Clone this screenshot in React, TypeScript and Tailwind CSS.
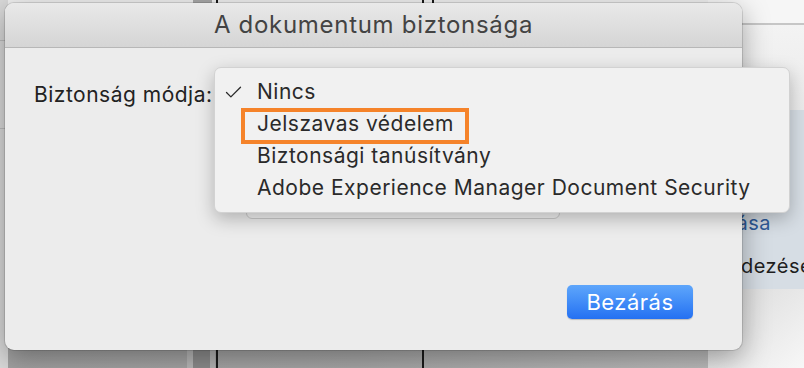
import { Check } from "lucide-react";

const items = [
  "Nincs",
  "Jelszavas védelem",
  "Biztonsági tanúsítvány",
  "Adobe Experience Manager Document Security",
];

function Backdrop() {
  return (
    <div className="absolute inset-0 flex">
      {/* left edge of the app behind */}
      <div className="flex w-[8px] flex-col bg-[#d9d9d9]">
        <div className="mt-[40px] h-px bg-[#bdbdbd]" />
        <div className="mt-[87px] h-px bg-[#bdbdbd]" />
      </div>

      <div className="flex flex-1 flex-col">
        <div className="flex h-[6px] pl-[185px]">
          <div className="w-[19px] bg-[#a9a9a9]" />
          <div className="ml-[4px] w-[2px] bg-[#1a1a1a]" />
          <div className="ml-[204px] h-[4px] w-[2px] bg-[#1a1a1a]" />
          <div className="ml-[8px] h-[4px] w-[2px] bg-[#1a1a1a]" />
        </div>
        <div className="flex-1" />
        <div className="flex h-[22px] bg-gradient-to-r from-[#a2a2a2] via-[#a8a8a8] to-[#bdbdbd] pl-[179px]">
          <div className="w-[6px] bg-[#b9b9b9]" />
          <div className="w-[17px] bg-[#8d8d8d]" />
          <div className="w-[5px] bg-[#b4b4b4]" />
          <div className="ml-[1px] w-[2px] bg-[#1a1a1a]" />
          <div className="ml-[204px] w-[2px] bg-[#1a1a1a]" />
        </div>
      </div>

      {/* right side of the app behind */}
      <div className="flex w-[96px] flex-col bg-[#efefef] text-[20px] leading-[24px] tracking-[0.5px]">
        <div className="h-[25px] border-b-2 border-[#c6c6c6] bg-[#f6f6f6]" />
        <div className="h-[85px] bg-gradient-to-b from-[#f3f3f3] to-[#ebebeb]" />
        <div className="flex h-[179px] flex-col overflow-hidden bg-[#d6dde4] pt-[101px]">
          <div className="flex justify-end whitespace-nowrap pr-[33px] text-[#2f5c9c]">
            <span>módosítása</span>
          </div>
          <div className="mt-[19px] whitespace-nowrap pl-[33px] text-[#1e1e1e]">dezések</div>
        </div>
        <div className="flex-1 bg-gradient-to-br from-[#d9d9d9] to-[#f7f7f7]" />
      </div>
    </div>
  );
}

export default function App() {
  return (
    <div
      className="relative h-[368px] w-[804px] overflow-hidden bg-[#efefef] text-[#222222]"
      style={{ fontFamily: "Inter, 'Noto Sans', sans-serif" }}
    >
      <Backdrop />

      <div className="absolute left-[5px] top-[3px] flex h-[347px] w-[737px] flex-col rounded-[9px] bg-[#ececec] shadow-[0_8px_28px_rgba(0,0,0,0.35),0_0_0_1px_rgba(0,0,0,0.12)]">
        <div className="flex h-[45px] items-center justify-center rounded-t-[9px] border-b border-[#b7b7b7] bg-gradient-to-b from-[#e9e9e9] to-[#d5d5d5] text-[24px] tracking-[0.7px] text-[#434343]">
          A dokumentum biztonsága
        </div>

        <div className="flex flex-1 flex-col pl-[29px] pr-[49px] pb-[31px] pt-[35px]">
          <div className="h-[24px] text-[21px] leading-[24px] tracking-[0.5px]">Biztonság módja:</div>
          <div className="ml-[212px] mt-[73px] h-[39px] w-[314px] rounded-[6px] border border-[#cacaca] bg-[#f1f1f1]" />

          <button className="ml-auto mt-auto h-[34px] w-[126px] rounded-[5px] bg-gradient-to-b from-[#5ea6fb] to-[#2470f2] text-[22px] tracking-[0.5px] text-white shadow-[0_1px_1px_rgba(0,0,0,0.2)]">
            Bezárás
          </button>
        </div>

        {/* opened pop-up menu */}
        <div className="absolute left-[209px] top-[64px] w-[576px] rounded-[7px] border border-[#d2d2d2] bg-[#f1f1f1] py-[8px] shadow-[0_6px_18px_rgba(0,0,0,0.25)]">
          {items.map((item, i) => (
            <div key={item} className="flex h-[32px] items-center text-[21px] tracking-[0.5px] text-[#2a2a2a]">
              <div className="flex w-[42px] pl-[8px]">
                {i === 0 && <Check size={21} strokeWidth={1.5} />}
              </div>
              {item}
            </div>
          ))}
          <div className="absolute left-[26px] top-[40px] h-[36px] w-[228px] border-[4px] border-[#f5832a]" />
        </div>
      </div>
    </div>
  );
}
